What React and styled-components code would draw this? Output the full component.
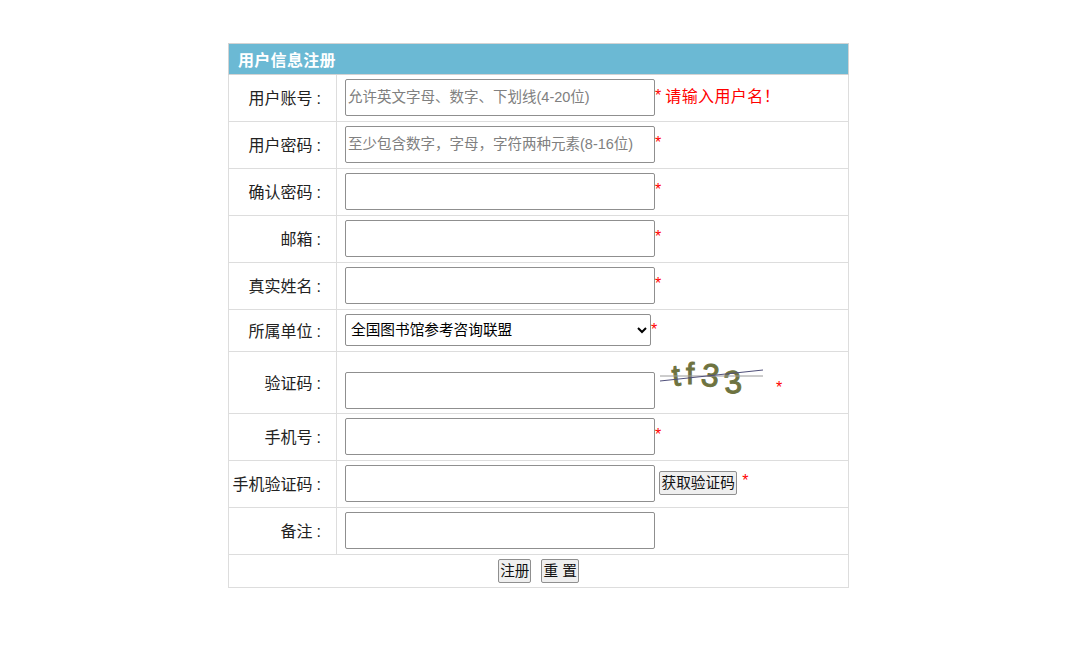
import React from "react";
import styled, { createGlobalStyle } from "styled-components";

const cjk = '"Liberation Sans", "Noto Sans CJK SC", sans-serif';

const GlobalStyle = createGlobalStyle`
  html, body {
    margin: 0;
    padding: 0;
    background: #fff;
    font-family: ${cjk};
  }
`;

const Page = styled.div`
  padding-top: 43px;
  display: flex;
  justify-content: center;
`;

const FormTable = styled.table`
  width: 621px;
  margin-left: -3px;
  border-collapse: collapse;
  table-layout: fixed;
  border: 1px solid #d3d3d3;
  color: #222;
  font-size: 16px;
`;

const TitleCell = styled.th`
  height: 30px;
  padding: 0 0 0 9px;
  background: #6bb9d4;
  color: #fff;
  font-size: 16px;
  font-weight: bold;
  letter-spacing: 0.3px;
  text-align: left;
  border: 1px solid #d3d3d3;
`;

const Row = styled.tr`
  height: ${(p) => p.$height || 47}px;
`;

const LabelCell = styled.td`
  padding: 0 14px 2px 0;
  box-sizing: border-box;
  text-align: right;
  border: 1px solid #ddd;
  white-space: nowrap;
`;

const Colon = styled.span`
  padding: 0 1px 0 4px;
`;

const ValueCell = styled.td`
  padding: 0 0 2px 8px;
  border: 1px solid #ddd;
  white-space: nowrap;
`;

const Field = styled.div`
  display: flex;
  align-items: ${(p) => p.$align || "flex-start"};
`;

const TextInput = styled.input`
  box-sizing: border-box;
  flex: none;
  width: 310px;
  height: 37px;
  margin-top: ${(p) => p.$top || 0}px;
  padding: 0 2px;
  border: 1px solid #8f8f8f;
  border-radius: 2px;
  background: #fff;
  font-family: ${cjk};
  font-size: 14.5px;
  outline: none;

  &::placeholder {
    color: #808080;
    opacity: 1;
  }
`;

const SelectBox = styled.select`
  box-sizing: border-box;
  flex: none;
  width: 306px;
  height: 32px;
  padding: 0 1px;
  border: 1px solid #8f8f8f;
  border-radius: 2px;
  background: #fff;
  color: #000;
  font-family: ${cjk};
  font-size: 14.67px;
`;

const Star = styled.span`
  color: #f00;
  font-size: 16px;
  line-height: 1;
  margin-top: ${(p) => p.$top ?? 9}px;
  margin-left: ${(p) => p.$left || 0}px;
`;

const ErrorText = styled.span`
  color: #f00;
  font-size: 16px;
  letter-spacing: 0.4px;
  line-height: 1;
  margin-left: 4px;
  margin-top: 10px;
`;

const PlainButton = styled.button`
  box-sizing: border-box;
  flex: none;
  height: 24px;
  padding: 0 1px;
  border: 1px solid #8f8f8f;
  border-radius: 2px;
  background: #efefef;
  color: #111;
  font-family: ${cjk};
  font-size: 14.67px;
  line-height: 1;
`;

const CodeButton = styled(PlainButton)`
  padding: 0 1.5px;
  margin-left: 4px;
`;

const ActionCell = styled.td`
  text-align: center;
  border: 1px solid #ddd;
  padding: 0;
`;

const Actions = styled.div`
  display: flex;
  justify-content: center;
  gap: 10px;
`;

const CaptchaImage = styled.svg`
  flex: none;
  margin: 0 0 0 4px;
  overflow: visible;
`;

const Captcha = () => (
  <CaptchaImage width="110" height="48" viewBox="0 -2 110 48">
    <g fill="#6e7340" stroke="#6e7340" strokeWidth="1" fontFamily='"Liberation Sans", sans-serif'>
      <text x="14" y="30" transform="rotate(-6 14 30)" fontSize="30">t</text>
      <text x="27" y="28" fontSize="30">f</text>
      <text x="41" y="29" transform="rotate(8 41 29)" fontSize="32">3</text>
      <text x="66" y="38" transform="rotate(-6 66 38)" fontSize="32">3</text>
    </g>
    <line x1="1" y1="20" x2="104" y2="20" stroke="#9a9a9a" strokeWidth="1" />
    <line x1="1" y1="25" x2="104" y2="14" stroke="#50507a" strokeWidth="1" />
  </CaptchaImage>
);

const fields = [
  { label: "用户账号", placeholder: "允许英文字母、数字、下划线(4-20位)", error: "请输入用户名\uFF01" },
  { label: "用户密码", placeholder: "至少包含数字\uFF0C字母\uFF0C字符两种元素(8-16位)" },
  { label: "确认密码" },
  { label: "邮箱" },
  { label: "真实姓名" },
];

const App = () => (
  <>
    <GlobalStyle />
    <Page>
      <FormTable>
        <colgroup>
          <col style={{ width: 108 }} />
          <col />
        </colgroup>
        <thead>
          <tr>
            <TitleCell colSpan={2}>用户信息注册</TitleCell>
          </tr>
        </thead>
        <tbody>
          {fields.map((f) => (
            <Row key={f.label}>
              <LabelCell>{f.label}<Colon>:</Colon></LabelCell>
              <ValueCell>
                <Field>
                  <TextInput placeholder={f.placeholder} />
                  <Star>*</Star>
                  {f.error && <ErrorText>{f.error}</ErrorText>}
                </Field>
              </ValueCell>
            </Row>
          ))}
          <Row $height={42}>
            <LabelCell>所属单位<Colon>:</Colon></LabelCell>
            <ValueCell>
              <Field>
                <SelectBox defaultValue="nlc">
                  <option value="nlc">全国图书馆参考咨询联盟</option>
                </SelectBox>
                <Star $top={8}>*</Star>
              </Field>
            </ValueCell>
          </Row>
          <Row $height={62}>
            <LabelCell>验证码<Colon>:</Colon></LabelCell>
            <ValueCell>
              <Field>
                <TextInput $top={18} />
                <Captcha />
                <Star $top={26} $left={7}>*</Star>
              </Field>
            </ValueCell>
          </Row>
          <Row>
            <LabelCell>手机号<Colon>:</Colon></LabelCell>
            <ValueCell>
              <Field>
                <TextInput />
                <Star>*</Star>
              </Field>
            </ValueCell>
          </Row>
          <Row>
            <LabelCell>手机验证码<Colon>:</Colon></LabelCell>
            <ValueCell>
              <Field $align="center">
                <TextInput />
                <CodeButton>获取验证码</CodeButton>
                <Star $top={-4} $left={5}>*</Star>
              </Field>
            </ValueCell>
          </Row>
          <Row>
            <LabelCell>备注<Colon>:</Colon></LabelCell>
            <ValueCell>
              <Field>
                <TextInput />
              </Field>
            </ValueCell>
          </Row>
          <Row $height={33}>
            <ActionCell colSpan={2}>
              <Actions>
                <PlainButton>注册</PlainButton>
                <PlainButton>重 置</PlainButton>
              </Actions>
            </ActionCell>
          </Row>
        </tbody>
      </FormTable>
    </Page>
  </>
);

export default App;
